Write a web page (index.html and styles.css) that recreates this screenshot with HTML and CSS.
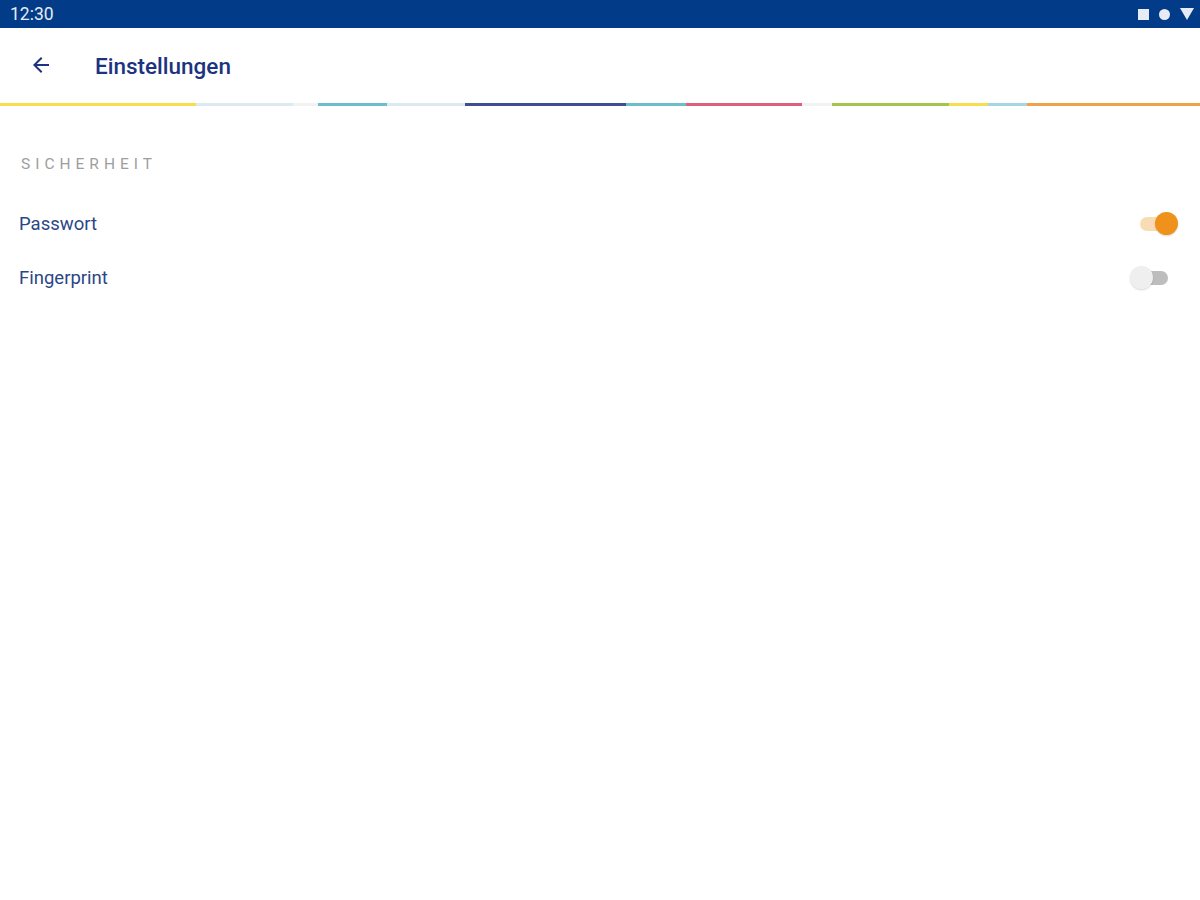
FILE: index.html
```html
<!DOCTYPE html>
<html lang="de">
<head>
    <meta charset="UTF-8">
    <meta name="viewport" content="width=device-width, initial-scale=1.0">
    <title>Einstellungen</title>
    <link rel="stylesheet" href="styles.css">
</head>
<body>
    <!-- Status bar -->
    <div class="status-bar">
        <span class="time">12:30</span>
        <div class="status-icons">
            <span class="icon-square"></span>
            <span class="icon-circle"></span>
            <svg class="icon-triangle" width="14" height="12" viewBox="0 0 14 12">
                <path d="M0 0 H14 L7 12 Z" fill="#e6ebf5"/>
            </svg>
        </div>
    </div>

    <!-- App bar -->
    <header class="app-bar">
        <button class="back-btn" type="button">
            <svg width="24" height="24" viewBox="0 0 24 24">
                <path d="M20 11H7.83l5.59-5.59L12 4l-8 8 8 8 1.41-1.41L7.83 13H20v-2z" fill="#1b3380"/>
            </svg>
        </button>
        <h1>Einstellungen</h1>
    </header>

    <!-- Colour stripe -->
    <div class="stripe">
        <span class="seg yellow" style="width:196px"></span>
        <span class="seg pale" style="width:97px"></span>
        <span class="seg gap" style="width:25px"></span>
        <span class="seg teal" style="width:69px"></span>
        <span class="seg pale" style="width:78px"></span>
        <span class="seg navy" style="width:161px"></span>
        <span class="seg teal" style="width:60px"></span>
        <span class="seg pink" style="width:116px"></span>
        <span class="seg gap" style="width:30px"></span>
        <span class="seg green" style="width:117px"></span>
        <span class="seg yellow" style="width:39px"></span>
        <span class="seg lightblue" style="width:39px"></span>
        <span class="seg orange" style="flex:1"></span>
    </div>

    <main class="content">
        <h2 class="section-title">SICHERHEIT</h2>

        <div class="setting-row">
            <span class="label">Passwort</span>
            <span class="switch on"><span class="thumb"></span></span>
        </div>
        <div class="setting-row">
            <span class="label">Fingerprint</span>
            <span class="switch off"><span class="thumb"></span></span>
        </div>
    </main>
</body>
</html>
```

FILE: styles.css
```css
/* Basic styling for the body */
body {
    font-family: Roboto, "Liberation Sans", Arial, sans-serif;
    background-color: #fff;
    margin: 0;
    padding: 0;
}

/* Status bar */
.status-bar {
    height: 28px;
    background-color: #023c88;
    display: flex;
    align-items: center;
    justify-content: space-between;
    padding: 0 6px 0 10px;
}

.time {
    color: #e6ebf5;
    font-size: 17.5px;
}

.status-icons {
    display: flex;
    align-items: center;
    gap: 10px;
}

.icon-square {
    width: 11px;
    height: 11px;
    background-color: #e6ebf5;
}

.icon-circle {
    width: 11px;
    height: 11px;
    border-radius: 50%;
    background-color: #e6ebf5;
}

/* App bar */
.app-bar {
    height: 75px;
    display: flex;
    align-items: center;
    padding-left: 29px;
}

.back-btn {
    background: none;
    border: none;
    padding: 0;
    width: 24px;
    height: 24px;
    cursor: pointer;
    margin-right: 42px;
    margin-top: -2px;
}

.app-bar h1 {
    margin: 0;
    font-size: 22.5px;
    font-weight: 500;
    color: #1b3380;
}

/* Colour stripe */
.stripe {
    display: flex;
    height: 3px;
}

.seg { display: block; height: 3px; }
.yellow { background-color: #f6df4a; }
.pale { background-color: #dbe9f1; }
.gap { background-color: #f2f2f2; }
.teal { background-color: #6cbfca; }
.navy { background-color: #3d4f90; }
.pink { background-color: #e0607c; }
.green { background-color: #a6c44c; }
.lightblue { background-color: #a4d6e3; }
.orange { background-color: #f0a24a; }

/* Settings list */
.content {
    padding: 0 22px 0 19px;
}

.section-title {
    margin: 49px 0 24px 2px;
    font-size: 15.5px;
    font-weight: 400;
    letter-spacing: 5px;
    color: #9e9e9e;
}

.setting-row {
    height: 54px;
    display: flex;
    align-items: center;
    justify-content: space-between;
}

.label {
    font-size: 18.5px;
    color: #2b4687;
}

/* Switch */
.switch {
    position: relative;
    width: 34px;
    height: 14px;
    border-radius: 7px;
}

.switch .thumb {
    position: absolute;
    top: -5px;
    width: 23px;
    height: 23px;
    border-radius: 50%;
    box-shadow: 0 1px 2px rgba(0, 0, 0, 0.15);
}

.switch.on {
    background-color: #f9dcb6;
    margin-right: 4px;
}

.switch.on .thumb {
    right: -4px;
    background-color: #ef921c;
}

.switch.off {
    background-color: #bdbdbd;
    margin-right: 10px;
}

.switch.off .thumb {
    left: -4px;
    background-color: #efefef;
}
```
